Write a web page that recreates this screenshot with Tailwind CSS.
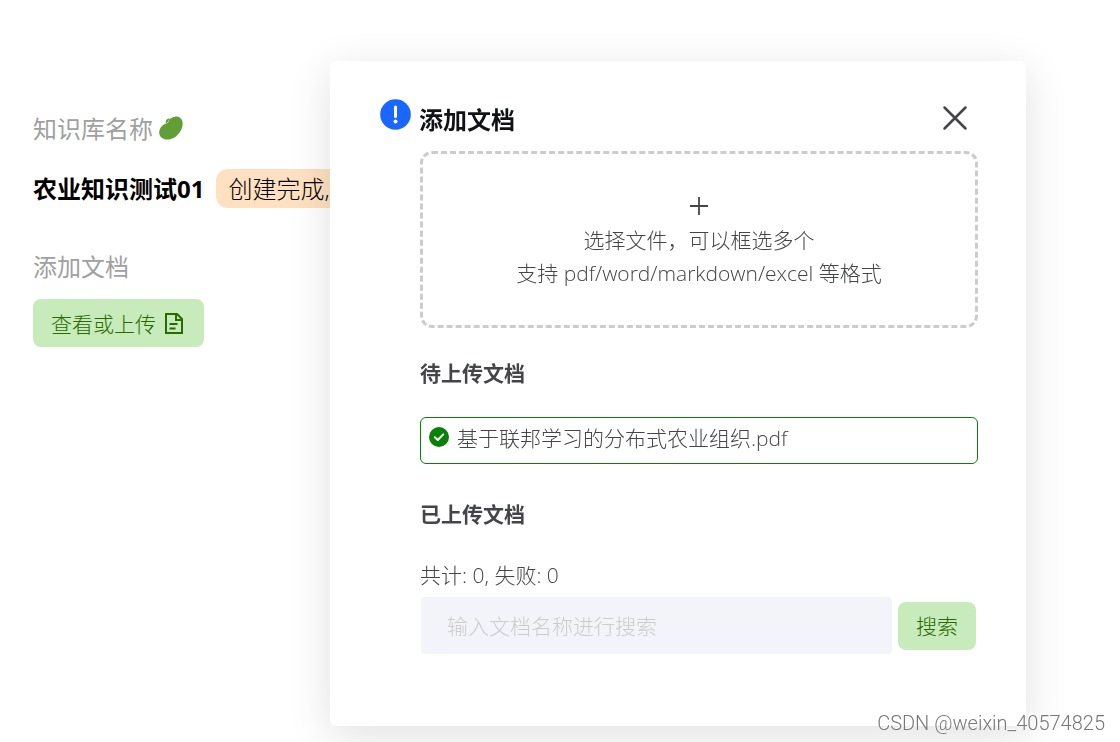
<!DOCTYPE html>
<html lang="zh-CN">
<head>
<meta charset="utf-8">
<meta name="viewport" content="width=device-width, initial-scale=1">
<title>添加文档</title>
<script src="https://cdn.jsdelivr.net/npm/@tailwindcss/browser@4"></script>
</head>
<body class="min-h-screen bg-white font-['Open_Sans','Noto_Sans_CJK_SC',sans-serif] font-light text-black">
<main class="flex flex-col items-start px-[33px] pt-[111px] text-2xl leading-9">
  <div class="flex items-center gap-[6px] font-normal text-[#a0a0a0]">
    <span>知识库名称</span>
    <svg class="mb-[2px] h-6 w-6" viewBox="0 0 24 24" aria-hidden="true">
      <path fill="#629e36" d="M11 2.800C13.500.8 16.500-.1 19.300.7c2.800.9 4.500 3.600 4.400 6.900-.2 5.200-2.800 9.800-6.700 12.800-3.500 2.700-8.500 3.900-12 2.600C1.800 21.800 0 19.300.2 16.200.4 12.500 2.800 9.300 6 7.900c1.200-.5 2.300-.6 3.200-1.600.9-1.100.6-2.500 1.800-3.500z"/>
      <path fill="#629e36" d="M6.800 7c-.5-2 .9-4.200 3-4.500 1-.1 1 .5.500 1-.9.8-.7 1.800-1.500 2.600-.5.600-1.400.9-2 .9z"/>
    </svg>
  </div>
  <div class="mt-[22px] flex items-center gap-3">
    <h1 class="font-bold">农业知识测试01</h1>
    <span class="w-44 rounded-xl bg-[#ffe1c1] px-3 leading-[39px]">创建完成,</span>
  </div>
  <div class="mt-[41px] font-normal text-[#a0a0a0]">添加文档</div>
  <button type="button" class="mt-[14px] flex h-12 items-center gap-2 rounded-lg bg-[#c7ebba] pt-px pr-5 pl-[18px] text-[21px] text-[#2a6a00]">
    查看或上传
    <svg class="h-6 w-5" viewBox="0 0 20 24" fill="none" stroke="currentColor" stroke-width="2" aria-hidden="true">
      <path d="M2 2h11l5 5v14H2zM12 2v6h6M5.500 12h8M5.500 16.500h6"/>
    </svg>
  </button>
</main>

<div class="fixed inset-0 overflow-hidden pt-[61px] pr-[94px] pl-[330px]">
  <section role="dialog" aria-labelledby="dialog-title" class="rounded-md bg-white pt-9 pr-12 pb-[72px] pl-[50px] text-[21px] text-[#444548] shadow-[0_10px_44px_rgba(0,0,0,0.12)]">
    <header class="flex items-center">
      <svg class="mr-2 mb-[10px] h-[31px] w-[31px]" viewBox="0 0 31 31" aria-hidden="true">
        <circle cx="15.500" cy="15.500" r="15.300" fill="#1a66ff"/>
        <path d="M15.500 8v9.500" stroke="#fff" stroke-width="3" stroke-linecap="round"/>
        <circle cx="15.500" cy="22.500" r="2" fill="#fff"/>
      </svg>
      <h2 id="dialog-title" class="text-2xl leading-[45px] font-bold text-[#111216]">添加文档</h2>
      <button type="button" aria-label="关闭" class="mr-[10px] mb-1 ml-auto">
        <svg class="h-[26px] w-[26px]" viewBox="0 0 26 26" stroke="#444548" stroke-width="2.500" stroke-linecap="round" aria-hidden="true"><path d="M2.500 2.500l21 21M23.500 2.500l-21 21"/></svg>
      </button>
    </header>
    <div class="mt-[9px] ml-10">
      <button type="button" class="flex h-[177px] w-full flex-col items-center rounded-xl border-3 border-dashed border-[#ccc] pt-[42px] leading-[33px]">
        <svg class="mb-2 h-5 w-5 shrink-0" viewBox="0 0 20 20" stroke="#444548" stroke-width="1.800" aria-hidden="true"><path d="M10 1v18M1 10h18"/></svg>
        <span>选择文件，可以框选多个</span>
        <span>支持 pdf/word/markdown/excel 等格式</span>
      </button>
      <h3 class="mt-[27px] leading-9 font-bold">待上传文档</h3>
      <ul class="mt-[26px]">
        <li class="flex h-[47px] items-center gap-2 rounded-md border border-[#078207] px-2 pb-1">
          <svg class="mb-1 h-5 w-5 shrink-0" viewBox="0 0 20 20" fill="none" aria-hidden="true"><circle cx="10" cy="10" r="10" fill="#078207"/><path d="M5.800 10.200l3 2.800 5.400-5.600" stroke="#fff" stroke-width="2" stroke-linecap="round" stroke-linejoin="round"/></svg>
          <span>基于联邦学习的分布式农业组织.pdf</span>
        </li>
      </ul>
      <h3 class="mt-8 leading-9 font-bold">已上传文档</h3>
      <p class="mt-[25px] leading-9">共计: 0, 失败: 0</p>
      <form class="mt-1 flex items-center gap-[6px] pr-[2px] pl-px">
        <input type="text" aria-label="文档名称" placeholder="输入文档名称进行搜索" class="h-[57px] min-w-0 flex-1 rounded-sm bg-[#f3f4f9] px-[26px] placeholder:text-[#ccc]">
        <button type="button" class="mt-px h-12 rounded-lg bg-[#c7ebba] px-[18px] pt-[2px] text-[#2a6a00]">搜索</button>
      </form>
    </div>
  </section>
</div>
<div class="fixed right-[15px] bottom-[5px] font-[Roboto,sans-serif] text-xl leading-7 font-light text-[#777] [text-shadow:-1px_-1px_0_#fff]">CSDN @weixin_40574825</div>
</body>
</html>
